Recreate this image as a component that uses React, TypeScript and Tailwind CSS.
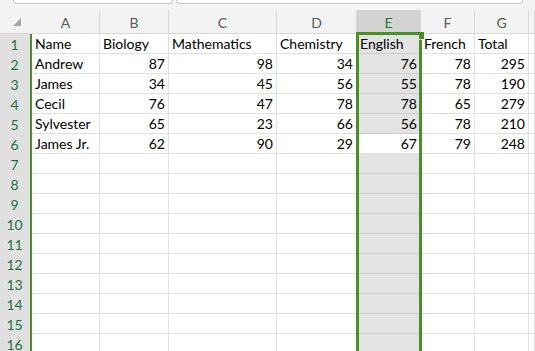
import React from "react";

const cols = [
  { key: "A", w: "w-[68px]" },
  { key: "B", w: "w-[69px]" },
  { key: "C", w: "w-[108px]" },
  { key: "D", w: "w-[80px]" },
  { key: "E", w: "w-[64px]" },
  { key: "F", w: "w-[54px]" },
  { key: "G", w: "w-[54px]" },
  { key: "H", w: "flex-1" },
];

const data: (string | number)[][] = [
  ["Name", "Biology", "Mathematics", "Chemistry", "English", "French", "Total"],
  ["Andrew", 87, 98, 34, 76, 78, 295],
  ["James", 34, 45, 56, 55, 78, 190],
  ["Cecil", 76, 47, 78, 78, 65, 279],
  ["Sylvester", 65, 23, 66, 56, 78, 210],
  ["James Jr.", 62, 90, 29, 67, 79, 248],
];

export default function App() {
  const rows = Array.from({ length: 16 }, (_, i) => i + 1);
  return (
    <div
      className="relative w-[535px] h-[351px] overflow-hidden bg-[#f3f3f3] text-black"
      style={{ fontFamily: "Lato, 'Open Sans', sans-serif" }}
    >
      {/* formula bar remnants */}
      <div className="flex h-[10px] items-start gap-[3px] pl-[13px]">
        <div className="w-[160px] h-[4px] bg-white border border-t-0 border-[#c8c8c8] rounded-b-[4px]" />
        <div className="w-[347px] h-[4px] bg-white border border-t-0 border-[#c8c8c8] rounded-b-[4px]" />
      </div>

      {/* column headers */}
      <div className="flex h-[24px]">
        <div className="w-[32px] h-[24px] border-b border-[#d4d4d4] flex items-end pl-[13px] pb-[7px]">
          <svg width="8" height="8" viewBox="0 0 8 8">
            <polygon points="8,0 8,8 0,8" fill="#a6a6a6" />
          </svg>
        </div>
        {cols.map((c) => (
          <div
            key={c.key}
            className={`${c.w} h-[24px] border-r border-b border-[#d8d8d8] flex items-center justify-center pt-[1px] text-[14px] ${
              c.key === "E" ? "bg-[#d3d3d3] text-[#1e7145]" : "text-[#5a5a5a]"
            }`}
          >
            {c.key === "H" ? "" : c.key}
          </div>
        ))}
      </div>

      {/* rows */}
      {rows.map((r) => {
        const rowData = data[r - 1];
        return (
          <div key={r} className="flex h-[20px]">
            <div className="w-[32px] h-[20px] bg-[#e0e0e0] border-r-2 border-[#4a8f26] flex items-end justify-center pr-[1px] text-[14px] leading-[19px] text-[#1e7145]">
              {r}
            </div>
            {cols.map((c, ci) => {
              const v = rowData ? rowData[ci] : undefined;
              const isNum = typeof v === "number";
              const isE = c.key === "E";
              const white = isE && r === 6;
              return (
                <div
                  key={c.key}
                  className={`${c.w} h-[20px] border-r border-b flex items-end overflow-hidden whitespace-nowrap text-[14px] leading-[19px] ${
                    isNum ? "justify-end pr-[3px]" : "justify-start pl-[3px]"
                  } ${
                    isE && !white
                      ? "bg-[#e3e3e3] border-[#cdcdcd]"
                      : "bg-white border-[#e1e1e1]"
                  }`}
                >
                  {v ?? ""}
                </div>
              );
            })}
          </div>
        );
      })}

      {/* selection overlay for column E */}
      <div className="absolute left-[356px] top-[32px] w-[3px] h-[330px] bg-[#4a8f26]" />
      <div className="absolute left-[356px] top-[32px] w-[63px] h-[3px] bg-[#4a8f26]" />
      <div className="absolute left-[419px] top-[32px] w-[5px] h-[7px] bg-[#4a8f26]" />
      <div className="absolute left-[419px] top-[40px] w-[3px] h-[320px] bg-[#4a8f26]" />
    </div>
  );
}
